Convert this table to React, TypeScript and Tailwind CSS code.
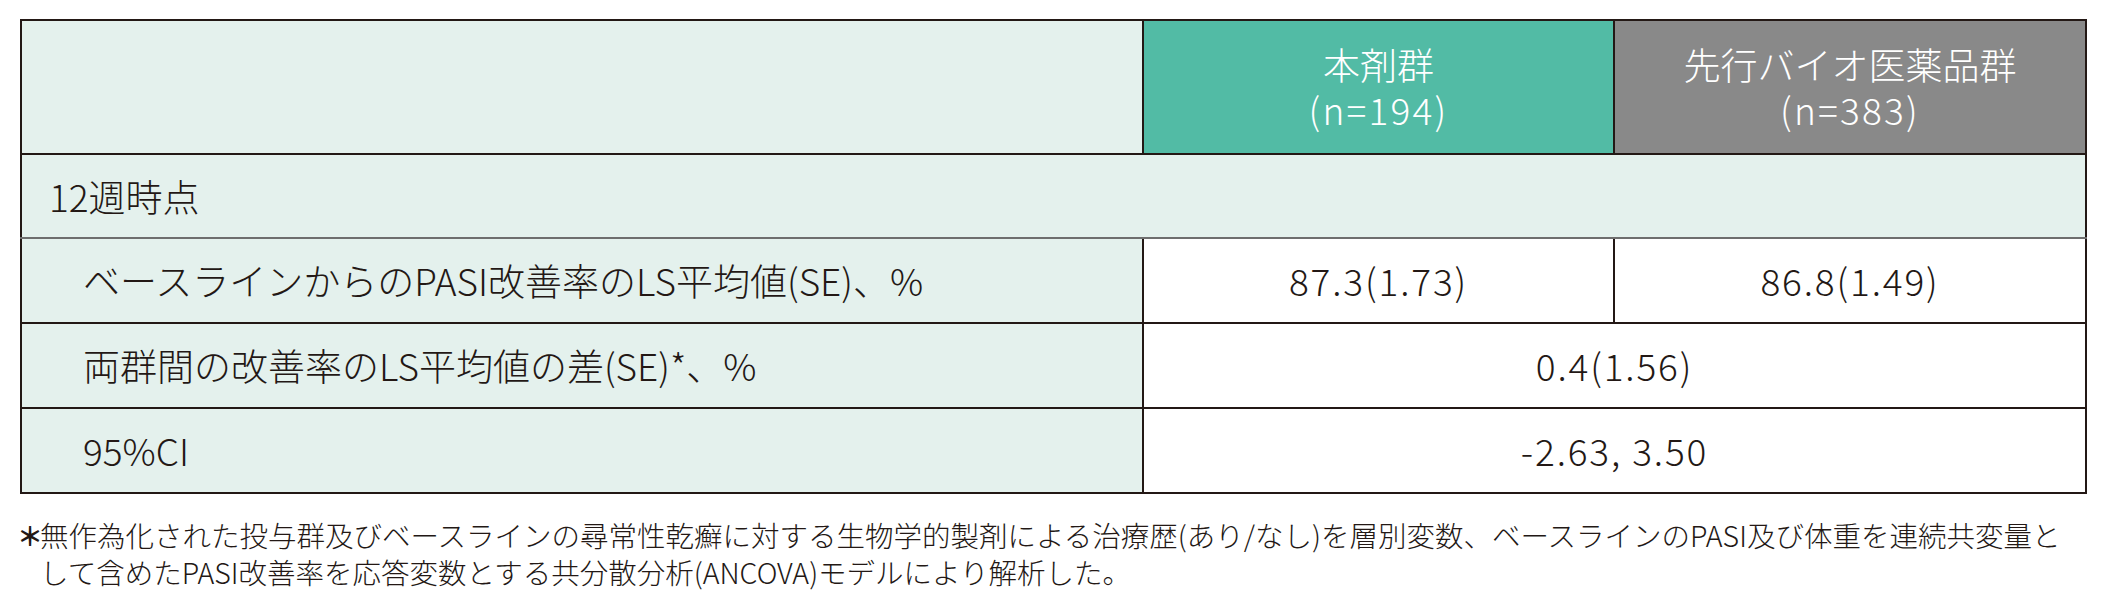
const rows = [
  { label: "ベースラインからのPASI改善率のLS平均値(SE)、%", a: "87.3(1.73)", b: "86.8(1.49)" },
  { label: "両群間の改善率のLS平均値の差(SE)*、%", span: "0.4(1.56)" },
  { label: "95%CI", span: "-2.63, 3.50" },
];

const cell = "border-2 border-[#231815] border-t-[#6e6e6e]";

export default function App() {
  return (
    <div
      className="w-[2114px] h-[609px] bg-white pl-[20px] pt-[19px] text-[#231815] font-light"
      style={{ fontFamily: '"Noto Sans CJK JP", "Noto Sans", sans-serif' }}
    >
      <table className="table-fixed border-collapse w-[2067px] text-[37px] leading-none">
        <colgroup>
          <col className="w-[1122px]" />
          <col className="w-[471px]" />
          <col className="w-[472px]" />
        </colgroup>
        <tbody>
          <tr className="h-[134px]">
            <td className="bg-[#e4f1ed] border-2 border-[#231815]" />
            <td className="bg-[#52bba5] border-2 border-[#231815] text-center text-white">
              <div className="leading-[45px]">本剤群</div>
              <div className="leading-[45px] tracking-[0.06em]">(n=194)</div>
            </td>
            <td className="bg-[#898989] border-2 border-[#231815] text-center text-white">
              <div className="leading-[45px]">先行バイオ医薬品群</div>
              <div className="leading-[45px] tracking-[0.06em]">(n=383)</div>
            </td>
          </tr>
          <tr className="h-[84px]">
            <td
              colSpan={3}
              className="bg-[#e4f1ed] border-2 border-[#231815] border-b-[#6e6e6e] pl-[27px]"
            >
              12週時点
            </td>
          </tr>
          {rows.map((r, i) => (
            <tr key={i} className="h-[85px]">
              <td className={`bg-[#e4f1ed] ${cell} pl-[61px] whitespace-nowrap`}>{r.label}</td>
              {r.span ? (
                <td colSpan={2} className={`bg-white ${cell} text-center tracking-[0.05em]`}>
                  {r.span}
                </td>
              ) : (
                <>
                  <td className={`bg-white ${cell} text-center tracking-[0.05em]`}>{r.a}</td>
                  <td className={`bg-white ${cell} text-center tracking-[0.05em]`}>{r.b}</td>
                </>
              )}
            </tr>
          ))}
        </tbody>
      </table>

      <div className="flex mt-[22px] text-[28.5px] leading-[37px] whitespace-nowrap">
        <span className="w-[20px] shrink-0 -ml-[3px] mr-[3px] text-[26px] font-bold tracking-[-0.3em]">＊</span>
        <div>
          無作為化された投与群及びベースラインの尋常性乾癬に対する生物学的製剤による治療歴(あり/なし)を層別変数、ベースラインのPASI及び体重を連続共変量と
          <br />
          して含めたPASI改善率を応答変数とする共分散分析(ANCOVA)モデルにより解析した。
        </div>
      </div>
    </div>
  );
}
